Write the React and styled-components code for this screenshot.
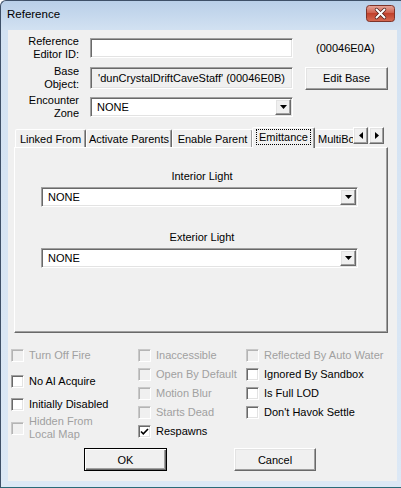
import React from 'react';
import styled, { createGlobalStyle, css } from 'styled-components';

const GlobalStyle = createGlobalStyle`
  html, body {
    margin: 0;
    padding: 0;
    background: #ffffff;
  }
  body {
    font-family: "Liberation Sans", Arial, sans-serif;
    font-size: 11px;
    color: #000;
  }
`;

const sunken = css`
  border: 1px solid;
  border-color: #a0a0a0 #ffffff #ffffff #a0a0a0;
  box-shadow: inset 1px 1px #696969, inset -1px -1px #e3e3e3;
`;

const raised = css`
  border: 1px solid;
  border-color: #ffffff #696969 #696969 #ffffff;
  box-shadow: inset -1px -1px #a0a0a0, inset 1px 1px #e3e3e3;
`;

const Window = styled.div`
  width: 401px;
  height: 488px;
  box-sizing: border-box;
  border: 1px solid #3e5068;
  border-right: none;
  border-bottom-color: #2a6a78;
  border-radius: 6px 0 0 0;
  background: linear-gradient(#b9cfe8, #d3e2f2 30px, #dce8f5);
  display: flex;
  flex-direction: column;
  overflow: hidden;
`;

const TitleBar = styled.div`
  height: 29px;
  flex: none;
  display: flex;
  justify-content: space-between;
  align-items: flex-start;
  padding: 0 6px 0 6px;
`;

const Title = styled.div`
  padding-top: 6px;
  line-height: 14px;
  font-size: 11.5px;
  color: #000;
`;

const CloseButton = styled.div`
  margin-top: 4px;
  width: 29px;
  height: 17px;
  display: flex;
`;

const Client = styled.div`
  flex: 1;
  margin: 0 4px 6px 7px;
  background: #f0f0f0;
  display: flex;
  flex-direction: column;
`;

const FieldRow = styled.div`
  display: flex;
  align-items: center;
  height: 26px;
  margin-top: ${p => p.$top}px;
`;

const RowLabel = styled.div`
  width: 71px;
  margin-right: 11px;
  text-align: right;
  line-height: 13px;
  flex: none;
`;

const TextField = styled.div`
  ${sunken};
  box-sizing: border-box;
  width: 203px;
  height: ${p => p.$h || 20}px;
  background: ${p => (p.$readOnly ? '#f0f0f0' : '#ffffff')};
  display: flex;
  align-items: center;
  justify-content: center;
  white-space: nowrap;
`;

const FormId = styled.div`
  margin-left: 23px;
`;

const PushButton = styled.div`
  ${raised};
  box-sizing: border-box;
  width: ${p => p.$w}px;
  height: 23px;
  margin-left: ${p => p.$left || 0}px;
  background: #f0f0f0;
  display: flex;
  align-items: center;
  justify-content: center;
  ${p => p.$default && css`
    border: 1px solid #000;
    box-shadow: inset 1px 1px #ffffff, inset -1px -1px #696969, inset -2px -2px #a0a0a0;
  `}
`;

const Combo = styled.div`
  ${sunken};
  box-sizing: border-box;
  width: ${p => p.$w}px;
  height: 20px;
  padding: 1px;
  background: #ffffff;
  display: flex;
  align-items: stretch;
`;

const ComboText = styled.div`
  flex: 1;
  padding-left: 5px;
  display: flex;
  align-items: center;
`;

const ComboButton = styled.div`
  ${raised};
  box-sizing: border-box;
  width: 16px;
  background: #f0f0f0;
  display: flex;
  align-items: center;
  justify-content: center;
`;

const TabStrip = styled.div`
  margin: 7px 0 0 6px;
  width: 374px;
  height: 20px;
  display: flex;
  align-items: flex-start;
  position: relative;
  z-index: 1;
`;

const TabViewport = styled.div`
  flex: 1;
  height: 21px;
  display: flex;
  align-items: flex-end;
  overflow: hidden;
  padding-left: 1px;
`;

const Tab = styled.div`
  flex: none;
  box-sizing: border-box;
  width: ${p => p.$w}px;
  height: ${p => (p.$active ? 21 : 18)}px;
  margin: ${p => (p.$active ? '0 -1px 0 -1px' : '0 0 1px 0')};
  border: 1px solid;
  border-bottom: none;
  border-color: #ffffff #696969 transparent #ffffff;
  border-radius: 2px 2px 0 0;
  box-shadow: inset -1px 0 #a0a0a0;
  background: #f0f0f0;
  display: flex;
  align-items: center;
  justify-content: ${p => (p.$clip ? 'flex-start' : 'center')};
  padding: ${p => (p.$clip ? '0 0 0 3px' : '0')};
  padding-bottom: ${p => (p.$active ? 2 : 0)}px;
  white-space: nowrap;
  position: relative;
  z-index: ${p => (p.$active ? 2 : 1)};
`;

const FocusRect = styled.span`
  outline: 1px dotted #000;
  outline-offset: 0;
  padding: 0 2px;
  line-height: 14px;
`;

const ScrollArrows = styled.div`
  display: flex;
  margin-right: 4px;
  gap: 1px;
  flex: none;
`;

const ArrowButton = styled.div`
  ${raised};
  box-sizing: border-box;
  width: 15px;
  height: 17px;
  background: #f0f0f0;
  display: flex;
  align-items: center;
  justify-content: center;
`;

const TabPanel = styled.div`
  box-sizing: border-box;
  margin-left: 6px;
  width: 374px;
  height: 186px;
  border: 1px solid;
  border-color: #ffffff #696969 #696969 #ffffff;
  box-shadow: inset -1px -1px #a0a0a0;
  display: flex;
  flex-direction: column;
  padding: 22px 29px 0 26px;
`;

const GroupLabel = styled.div`
  text-align: center;
  line-height: 13px;
  margin-top: ${p => p.$top}px;
  margin-bottom: 4px;
  padding-left: 5px;
`;

const Flags = styled.div`
  margin-top: 16px;
  padding-left: 3px;
  display: grid;
  grid-template-columns: 127px 108px 1fr;
  align-items: start;
`;

const FlagColumn = styled.div`
  display: flex;
  flex-direction: column;
`;

const Flag = styled.div`
  display: flex;
  align-items: center;
  gap: 5px;
  line-height: 13px;
  margin-top: ${p => p.$top ?? 6}px;
  color: ${p => (p.$disabled ? '#a0a0a0' : '#000000')};
  white-space: nowrap;
`;

const Box = styled.span`
  ${sunken};
  flex: none;
  box-sizing: border-box;
  width: 13px;
  height: 13px;
  background: ${p => (p.$disabled ? '#f0f0f0' : '#ffffff')};
  ${p => p.$disabled && css`
    border-color: #c8c8c8 #ffffff #ffffff #c8c8c8;
    box-shadow: inset 1px 1px #b4b4b4;
  `}
  display: flex;
  align-items: center;
  justify-content: center;
`;

const ButtonRow = styled.div`
  margin-top: 7px;
  padding-left: 76px;
  display: flex;
  gap: 67px;
`;

const DownArrow = () => (
  <svg width="7" height="4" viewBox="0 0 7 4">
    <path d="M0 0h7L3.5 4z" fill="#000" />
  </svg>
);

const SideArrow = ({ dir }) => (
  <svg width="4" height="7" viewBox="0 0 4 7">
    <path d={dir === 'left' ? 'M4 0v7L0 3.5z' : 'M0 0v7l4-3.5z'} fill="#000" />
  </svg>
);

const CheckMark = () => (
  <svg width="9" height="9" viewBox="0 0 9 9">
    <path d="M1 4.5l2.3 2.3L8 2" stroke="#000" strokeWidth="1.6" fill="none" />
  </svg>
);

const CloseGlyph = () => (
  <svg width="29" height="17" viewBox="0 0 29 17">
    <defs>
      <linearGradient id="closeBg" x1="0" y1="0" x2="0" y2="1">
        <stop offset="0" stopColor="#e6a79c" />
        <stop offset="0.45" stopColor="#d0624f" />
        <stop offset="0.5" stopColor="#c1412c" />
        <stop offset="1" stopColor="#d66b53" />
      </linearGradient>
    </defs>
    <rect x="0.5" y="0.5" width="28" height="16" rx="3" fill="url(#closeBg)" stroke="#7d3329" />
    <path d="M10.5 4.5l8 8M18.5 4.5l-8 8" stroke="#4a1d18" strokeWidth="3.4" strokeLinecap="round" />
    <path d="M10.5 4.5l8 8M18.5 4.5l-8 8" stroke="#ffffff" strokeWidth="2" strokeLinecap="round" />
  </svg>
);

const DropDown = ({ width, value }) => (
  <Combo $w={width}>
    <ComboText>{value}</ComboText>
    <ComboButton><DownArrow /></ComboButton>
  </Combo>
);

const FlagItem = ({ disabled, checked, top, children }) => (
  <Flag $disabled={disabled} $top={top}>
    <Box $disabled={disabled}>{checked && <CheckMark />}</Box>
    <span>{children}</span>
  </Flag>
);

export default function App() {
  return (
    <>
      <GlobalStyle />
      <Window>
        <TitleBar>
          <Title>Reference</Title>
          <CloseButton><CloseGlyph /></CloseButton>
        </TitleBar>
        <Client>
          <FieldRow $top={5}>
            <RowLabel>Reference<br />Editor ID:</RowLabel>
            <TextField />
            <FormId>(00046E0A)</FormId>
          </FieldRow>
          <FieldRow $top={4}>
            <RowLabel>Base<br />Object:</RowLabel>
            <TextField $readOnly $h={22}>'dunCrystalDriftCaveStaff' (00046E0B)</TextField>
            <PushButton $w={83} $left={12}>Edit Base</PushButton>
          </FieldRow>
          <FieldRow $top={3}>
            <RowLabel>Encounter<br />Zone</RowLabel>
            <DropDown width={203} value="NONE" />
          </FieldRow>

          <TabStrip>
            <TabViewport>
              <Tab $w={71}>Linked From</Tab>
              <Tab $w={86}>Activate Parents</Tab>
              <Tab $w={81}>Enable Parent</Tab>
              <Tab $w={63} $active><FocusRect>Emittance</FocusRect></Tab>
              <Tab $w={60} $clip>MultiBound</Tab>
            </TabViewport>
            <ScrollArrows>
              <ArrowButton><SideArrow dir="left" /></ArrowButton>
              <ArrowButton><SideArrow dir="right" /></ArrowButton>
            </ScrollArrows>
          </TabStrip>
          <TabPanel>
            <GroupLabel $top={0}>Interior Light</GroupLabel>
            <DropDown width={317} value="NONE" />
            <GroupLabel $top={24}>Exterior Light</GroupLabel>
            <DropDown width={317} value="NONE" />
          </TabPanel>

          <Flags>
            <FlagColumn>
              <FlagItem disabled top={0}>Turn Off Fire</FlagItem>
              <FlagItem top={13}>No AI Acquire</FlagItem>
              <FlagItem top={10}>Initially Disabled</FlagItem>
              <FlagItem disabled top={4}>Hidden From<br />Local Map</FlagItem>
            </FlagColumn>
            <FlagColumn>
              <FlagItem disabled top={0}>Inaccessible</FlagItem>
              <FlagItem disabled>Open By Default</FlagItem>
              <FlagItem disabled>Motion Blur</FlagItem>
              <FlagItem disabled>Starts Dead</FlagItem>
              <FlagItem checked>Respawns</FlagItem>
            </FlagColumn>
            <FlagColumn>
              <FlagItem disabled top={0}>Reflected By Auto Water</FlagItem>
              <FlagItem>Ignored By Sandbox</FlagItem>
              <FlagItem>Is Full LOD</FlagItem>
              <FlagItem>Don't Havok Settle</FlagItem>
            </FlagColumn>
          </Flags>

          <ButtonRow>
            <PushButton $w={83} $default>OK</PushButton>
            <PushButton $w={82}>Cancel</PushButton>
          </ButtonRow>
        </Client>
      </Window>
    </>
  );
}
